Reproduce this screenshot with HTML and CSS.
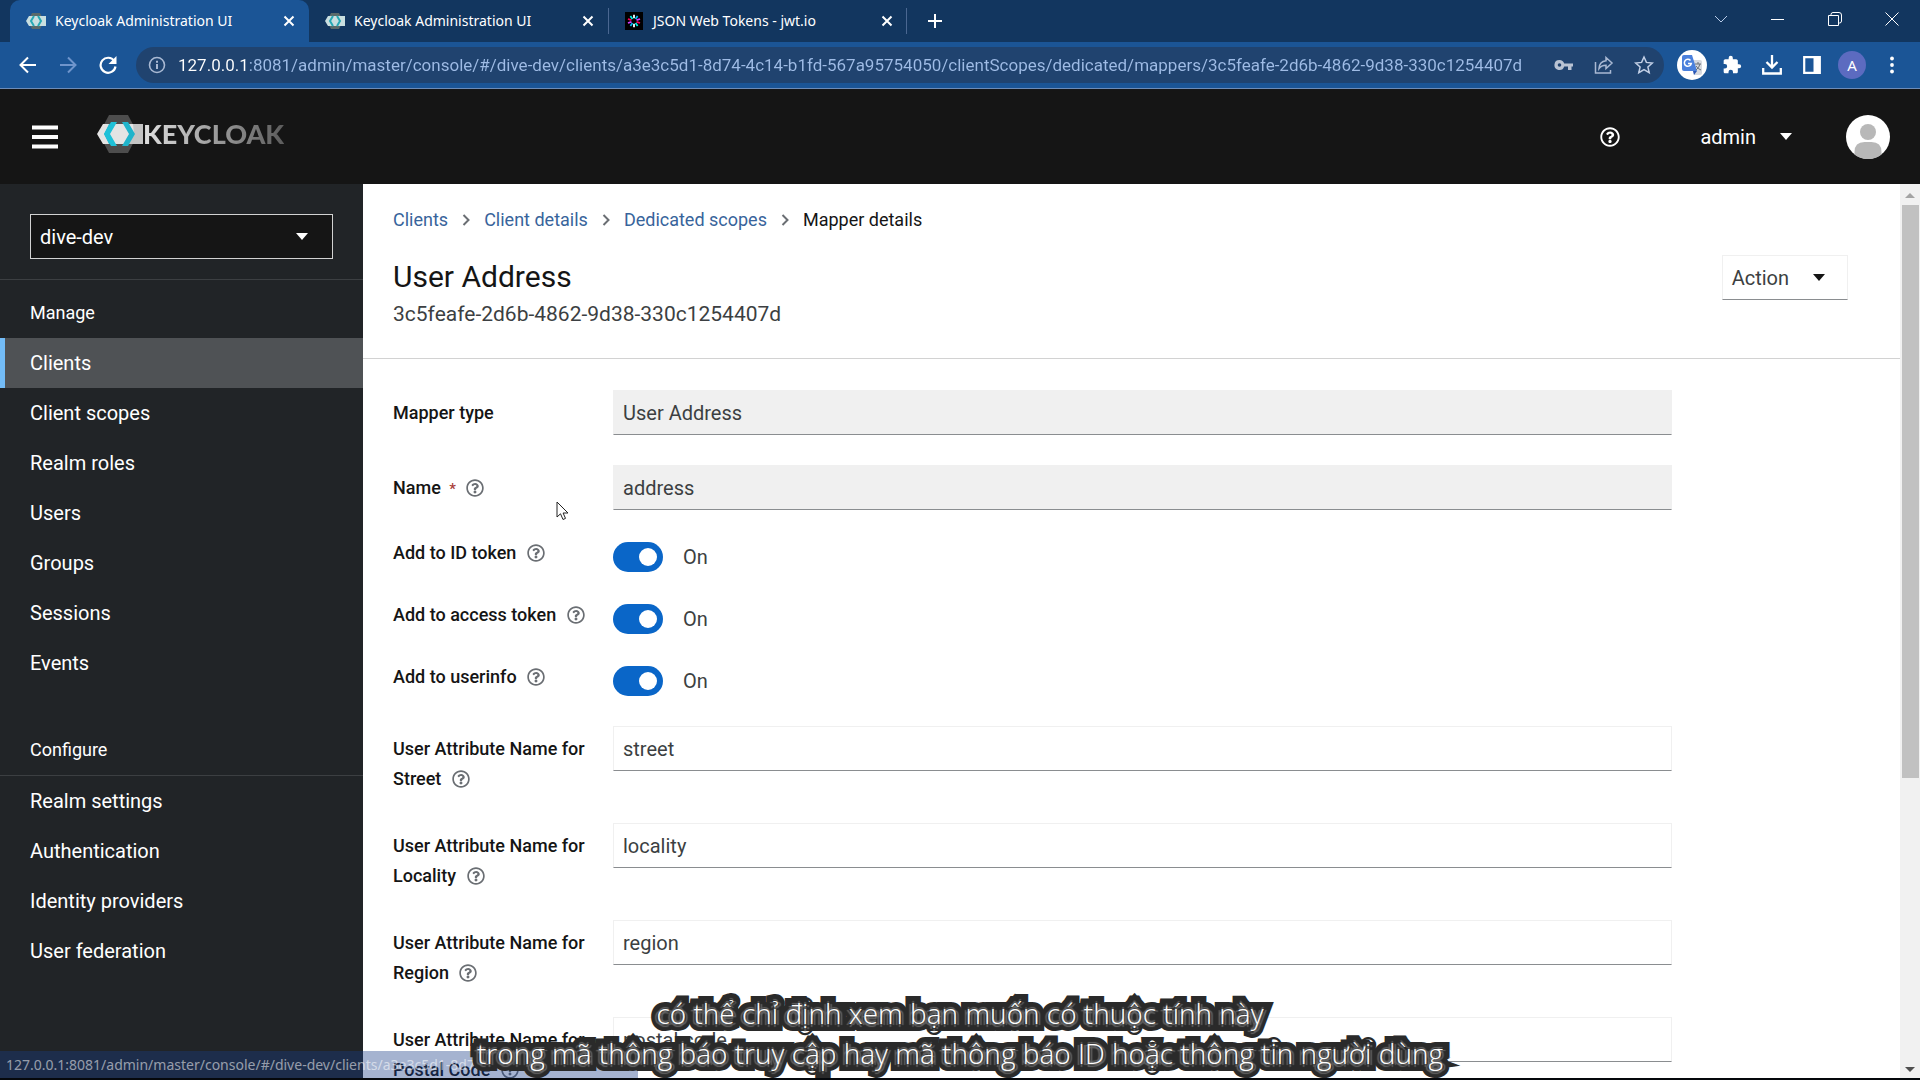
FILE: index.html
```html
<!DOCTYPE html>
<html lang="en">
<head>
<meta charset="utf-8">
<meta name="viewport" content="width=device-width, initial-scale=1">
<title>Keycloak Administration UI</title>
<link rel="stylesheet" href="styles.css">
</head>
<body>
<svg class="defs" aria-hidden="true">
  <defs>
    <symbol id="favicon" viewBox="0 0 20 16">
      <path d="M6 0h8l4 8-4 8H6L2 8z" fill="#5a6a6a"/>
      <path d="M3 3h17v10H3L0 8z" fill="#c9dfe0"/>
      <path d="M8 3 5 8l3 5M12 3l3 5-3 5" fill="none" stroke="#27a9b5" stroke-width="2"/>
    </symbol>
    <symbol id="close" viewBox="0 0 12 12"><path d="m1.500 1.500 9 9m0-9-9 9" fill="none" stroke="currentColor" stroke-width="2"/></symbol>
    <symbol id="help" viewBox="0 0 512 512">
      <path fill="currentColor" d="M256 8C119 8 8 119 8 256c0 137 111 248 248 248s248-111 248-248C504 119 393 8 256 8zm0 448c-110.500 0-200-89.400-200-200 0-110.500 89.500-200 200-200 110.500 0 200 89.500 200 200 0 110.500-89.400 200-200 200zm107.200-255.200c0 67.100-72.400 68.100-72.400 92.900V300c0 6.600-5.400 12-12 12h-45.600c-6.600 0-12-5.400-12-12v-8.700c0-35.700 27.100-50 47.600-61.500 17.600-9.800 28.300-16.500 28.300-29.600 0-17.200-22-28.700-39.800-28.700-23.200 0-33.900 11-48.900 30-4.100 5.100-11.500 6.100-16.700 2.100l-27.800-21.100c-5.100-3.900-6.300-11.100-2.600-16.400C184.800 131.500 214.900 112 261.800 112c49.100 0 101.500 38.300 101.500 88.800zM298 368c0 23.200-18.800 42-42 42s-42-18.800-42-42 18.800-42 42-42 42 18.800 42 42z"/>
    </symbol>
    <symbol id="caret" viewBox="0 0 12 7"><path d="M0 0h12L6 7z" fill="currentColor"/></symbol>
    <symbol id="angle" viewBox="0 0 8 12"><path d="m1.500 1 5 5-5 5" fill="none" stroke="#6a6e73" stroke-width="2"/></symbol>
  </defs>
</svg>

<header class="browser">
  <div class="tabs">
    <div class="tab tab-active">
      <svg class="favicon"><use href="#favicon"/></svg>
      <span class="tab-title">Keycloak Administration UI</span>
      <button class="icon-btn" aria-label="Close tab"><svg class="close"><use href="#close"/></svg></button>
    </div>
    <div class="tab">
      <svg class="favicon"><use href="#favicon"/></svg>
      <span class="tab-title">Keycloak Administration UI</span>
      <button class="icon-btn" aria-label="Close tab"><svg class="close"><use href="#close"/></svg></button>
    </div>
    <div class="tab tab-ruled">
      <svg class="favicon" viewBox="0 0 20 20">
        <path d="M0 0h20v20H0z" fill="#000"/>
        <g fill="none" stroke-width="2">
          <path d="M10 3v4M10 13v4" stroke="#fff"/>
          <path d="m14 4.500-2.300 3.200M8.300 12.300 6 15.500" stroke="#00b9f1"/>
          <path d="m16.700 7.800-3.900 1.300M7.200 10.900l-3.900 1.300" stroke="#d63aff"/>
          <path d="m16.700 12.200-3.900-1.300M7.200 9.100 3.300 7.800" stroke="#fb015b"/>
          <path d="m14 15.500-2.300-3.200M8.300 7.700 6 4.500" stroke="#00f2e6"/>
        </g>
      </svg>
      <span class="tab-title">JSON Web Tokens - jwt.io</span>
      <button class="icon-btn" aria-label="Close tab"><svg class="close"><use href="#close"/></svg></button>
    </div>
    <button class="icon-btn new-tab" aria-label="New tab"><svg class="i16" viewBox="0 0 16 16"><path d="M8 1v14M1 8h14" stroke="#fff" stroke-width="2"/></svg></button>
    <div class="window-controls">
      <button class="icon-btn" aria-label="Search tabs"><svg class="i14" viewBox="0 0 14 14"><path d="m1 4 6 6 6-6" fill="none" stroke="#b8cbe8"/></svg></button>
      <button class="icon-btn" aria-label="Minimise"><svg class="i14" viewBox="0 0 14 14"><path d="M0 7.500h13" stroke="#fff"/></svg></button>
      <button class="icon-btn" aria-label="Restore"><svg class="i14" viewBox="0 0 14 14"><path d="M.5 3.500h10v10H.500zM3 3.500V2.500Q3 .5 5 .5h6q2.500 0 2.500 2.500v6q0 2-2 2h-1" fill="none" stroke="#fff"/></svg></button>
      <button class="icon-btn" aria-label="Close window"><svg class="i14" viewBox="0 0 14 14"><path d="m.5.5 13 13m0-13-13 13" stroke="#fff"/></svg></button>
    </div>
  </div>
  <div class="toolbar">
    <button class="icon-btn" aria-label="Back"><svg class="i18" viewBox="0 0 18 18"><path d="M17 9H2m7-7.500L1.500 9 9 16.500" fill="none" stroke="#fff" stroke-width="2"/></svg></button>
    <button class="icon-btn" aria-label="Forward"><svg class="i18" viewBox="0 0 18 18"><path d="M1 9h15M9 1.500 16.500 9 9 16.500" fill="none" stroke="#6f95cc" stroke-width="2"/></svg></button>
    <button class="icon-btn" aria-label="Reload"><svg class="i18" viewBox="0 0 18 18"><path d="M15.300 5A7.500 7.500 0 1 0 16.500 10.500" fill="none" stroke="#fff" stroke-width="2.200"/><path d="M17.500 0v8h-8z" fill="#fff"/></svg></button>
    <div class="omnibox">
      <svg class="i18" viewBox="0 0 18 18"><circle cx="9" cy="9" r="7.500" fill="none" stroke="#a9b9d3" stroke-width="1.600"/><path d="M9 8v5M9 4.800v2" stroke="#a9b9d3" stroke-width="2"/></svg>
      <input class="url" type="text" aria-label="Address" value="127.0.0.1:8081/admin/master/console/#/dive-dev/clients/a3e3c5d1-8d74-4c14-b1fd-567a95754050/clientScopes/dedicated/mappers/3c5feafe-2d6b-4862-9d38-330c1254407d">
      <button class="icon-btn" aria-label="Passwords"><svg class="i20" viewBox="0 0 20 20"><path fill="#b9c3d3" fill-rule="evenodd" d="M5.500 5a5 5 0 1 0 4.700 6.500H14V15h3.500v-3.500H19v-3h-8.800A5 5 0 0 0 5.500 5zm0 3.200a1.800 1.800 0 1 1 0 3.600 1.800 1.800 0 0 1 0-3.600z"/></svg></button>
      <button class="icon-btn" aria-label="Share"><svg class="i20" viewBox="0 0 20 20"><path d="M1.500 7v11h15v-3M12 2.500l6 5.500-6 5.500v-3.300c-3.500 0-5.500 1-7 3.300.3-4.500 2.500-7.300 7-7.700z" fill="none" stroke="#a9b9d3" stroke-width="1.500"/></svg></button>
      <button class="icon-btn" aria-label="Bookmark"><svg class="i20" viewBox="0 0 20 20"><path d="m10 2 2.400 5.400 5.900.6-4.400 3.900 1.300 5.800L10 14.700l-5.200 3 1.300-5.800L1.700 8l5.900-.6z" fill="none" stroke="#c3d0e6" stroke-width="1.500"/></svg></button>
    </div>
    <button class="icon-btn" aria-label="Translate"><svg class="i30" viewBox="0 0 30 30"><circle cx="15" cy="15" r="15" fill="#fff"/><path d="M14 10h9q2 0 2 2v11q0 2-2 2h-6z" fill="#d6d9df"/><path d="M7 5h8l5 16H7q-2 0-2-2V7q0-2 2-2z" fill="#4a80dc"/><path d="m16 21 4 0-3 4z" fill="#2a56b5"/><path d="M13.500 10.500a3.500 3.500 0 1 0 .8 3H11" fill="none" stroke="#fff" stroke-width="1.500"/><path d="M18 14h6m-3-2v2m2 0q-1 4-4 6m0-4q2 3 5 4" fill="none" stroke="#6a7078"/></svg></button>
    <button class="icon-btn" aria-label="Extensions"><svg class="i20" viewBox="0 0 24 24"><path fill="#fff" d="M20.500 11H19V7c0-1.100-.9-2-2-2h-4V3.500a2.500 2.500 0 0 0-5 0V5H4c-1.100 0-2 .9-2 2v3.800h1.500a2.700 2.700 0 0 1 0 5.400H2V20c0 1.100.9 2 2 2h3.800v-1.500a2.700 2.700 0 0 1 5.400 0V22H17c1.100 0 2-.9 2-2v-4h1.500a2.500 2.500 0 0 0 0-5z"/></svg></button>
    <button class="icon-btn" aria-label="Downloads"><svg class="i20" viewBox="0 0 20 20"><path d="M10 0v12M4.500 7l5.500 5.500L15.500 7M1.200 13v5.500h17.600V13" fill="none" stroke="#fff" stroke-width="2.300"/></svg></button>
    <button class="icon-btn" aria-label="Side panel"><svg class="i18" viewBox="0 0 18 18"><path d="M1.200 1.200h15.600v15.600H1.200z" fill="none" stroke="#fff" stroke-width="2.200"/><path d="M10.500 1H17v16h-6.500z" fill="#fff"/></svg></button>
    <button class="icon-btn profile" aria-label="Profile A">A</button>
    <button class="icon-btn" aria-label="Menu"><svg class="i18" viewBox="0 0 18 18" fill="#fff"><circle cx="9" cy="2.500" r="1.900"/><circle cx="9" cy="9" r="1.900"/><circle cx="9" cy="15.500" r="1.900"/></svg></button>
  </div>
</header>

<div class="masthead">
  <button class="icon-btn" aria-label="Global navigation"><svg class="burger" viewBox="0 0 26 24"><path d="M0 2.500h26M0 12h26M0 21.500h26" stroke="#fff" stroke-width="4"/></svg></button>
  <a class="brand" href="#">
    <svg class="brand-mark" viewBox="0 0 46 38">
      <path d="M12 0h19l10 19-10 19H12L2 19z" fill="#4d4d4d"/>
      <path d="M6 9h40v20H6L0 19z" fill="#e4e4e4"/>
      <path d="M36 9h10v20H32l5-10z" fill="#c4c4c4"/>
      <path d="M12 9h6l-6 10 6 10h-6L7 19z" fill="#20b6ce"/>
      <path d="m14 7 6 0-7 12 7 12h-6L7 19z" fill="#1fc1d8"/>
      <path d="M25 7h6l7 12-7 12h-6l7-12z" fill="#1fb4cb"/>
    </svg>
    <span class="brand-name">KEYCLOAK</span>
  </a>
  <div class="masthead-tools">
    <button class="icon-btn" aria-label="Help"><svg class="i20"><use href="#help"/></svg></button>
    <button class="user-menu">admin <svg class="caret"><use href="#caret"/></svg></button>
    <svg class="avatar" viewBox="0 0 44 44"><circle cx="22" cy="22" r="22" fill="#fff"/><circle cx="22" cy="17" r="8" fill="#b8b8b8"/><path d="M8.500 39.400V37q0-10 10-10h7q10 0 10 10v2.400a22 22 0 0 1-27 0z" fill="#b8b8b8"/></svg>
  </div>
</div>

<div class="page">
  <nav class="sidebar">
    <div class="realm">
      <div class="realm-box">
        <select class="realm-select" aria-label="Realm"><option>dive-dev</option></select>
        <svg class="caret"><use href="#caret"/></svg>
      </div>
    </div>
    <h2 class="nav-title">Manage</h2>
    <ul class="nav-list">
      <li><a class="nav-link nav-current" href="#">Clients</a></li>
      <li><a class="nav-link" href="#">Client scopes</a></li>
      <li><a class="nav-link" href="#">Realm roles</a></li>
      <li><a class="nav-link" href="#">Users</a></li>
      <li><a class="nav-link" href="#">Groups</a></li>
      <li><a class="nav-link" href="#">Sessions</a></li>
      <li><a class="nav-link" href="#">Events</a></li>
    </ul>
    <h2 class="nav-title nav-title-second">Configure</h2>
    <ul class="nav-list nav-list-ruled">
      <li><a class="nav-link" href="#">Realm settings</a></li>
      <li><a class="nav-link" href="#">Authentication</a></li>
      <li><a class="nav-link" href="#">Identity providers</a></li>
      <li><a class="nav-link" href="#">User federation</a></li>
    </ul>
  </nav>

  <main class="content">
    <div class="page-head">
      <nav class="crumbs" aria-label="Breadcrumb">
        <a href="#">Clients</a><svg class="angle"><use href="#angle"/></svg>
        <a href="#">Client details</a><svg class="angle"><use href="#angle"/></svg>
        <a href="#">Dedicated scopes</a><svg class="angle"><use href="#angle"/></svg>
        <span>Mapper details</span>
      </nav>
      <div class="title-row">
        <div>
          <h1 class="title">User Address</h1>
          <p class="subtitle">3c5feafe-2d6b-4862-9d38-330c1254407d</p>
        </div>
        <button class="action">Action <svg class="caret"><use href="#caret"/></svg></button>
      </div>
    </div>

    <form class="form">
      <div class="row">
        <label class="label" for="type">Mapper type</label>
        <input class="field field-off" id="type" type="text" value="User Address" readonly>
      </div>
      <div class="row">
        <label class="label" for="name">Name <span class="star">*</span> <svg class="help"><use href="#help"/></svg></label>
        <input class="field field-off" id="name" type="text" value="address" readonly>
      </div>
      <div class="row row-switch">
        <label class="label" for="idtoken">Add to ID token <svg class="help"><use href="#help"/></svg></label>
        <div class="switch-line"><input class="switch" id="idtoken" type="checkbox" checked><span>On</span></div>
      </div>
      <div class="row row-switch">
        <label class="label" for="access">Add to access token <svg class="help"><use href="#help"/></svg></label>
        <div class="switch-line"><input class="switch" id="access" type="checkbox" checked><span>On</span></div>
      </div>
      <div class="row row-switch">
        <label class="label" for="userinfo">Add to userinfo <svg class="help"><use href="#help"/></svg></label>
        <div class="switch-line"><input class="switch" id="userinfo" type="checkbox" checked><span>On</span></div>
      </div>
      <div class="row">
        <label class="label" for="street">User Attribute Name for<br>Street <svg class="help"><use href="#help"/></svg></label>
        <input class="field" id="street" type="text" value="street">
      </div>
      <div class="row">
        <label class="label" for="locality">User Attribute Name for<br>Locality <svg class="help"><use href="#help"/></svg></label>
        <input class="field" id="locality" type="text" value="locality">
      </div>
      <div class="row">
        <label class="label" for="region">User Attribute Name for<br>Region <svg class="help"><use href="#help"/></svg></label>
        <input class="field" id="region" type="text" value="region">
      </div>
      <div class="row">
        <label class="label" for="postal">User Attribute Name for<br>Postal Code <svg class="help"><use href="#help"/></svg></label>
        <input class="field" id="postal" type="text" value="postal code">
      </div>
    </form>
  </main>

  <div class="scrollbar" aria-hidden="true">
    <svg class="arrow arrow-up" viewBox="0 0 10 5"><path d="M0 5h10L5 0z" fill="#a3a3a3"/></svg>
    <div class="track"><div class="thumb"></div></div>
    <svg class="arrow" viewBox="0 0 10 5"><path d="M0 0h10L5 5z" fill="#505050"/></svg>
  </div>
</div>

<svg class="pointer" viewBox="0 0 13 20" aria-hidden="true"><path d="M1 1v15l3.500-3.200L7 18.500l2.500-1.100-2.400-5.400H12z" fill="#fff" stroke="#222"/></svg>
<div class="status">127.0.0.1:8081/admin/master/console/#/dive-dev/clients/a3e3c5d1-8d74-4c14-b1fd-567…</div>
<div class="captions">có thể chỉ định xem bạn muốn có thuộc tính này<br>trong mã thông báo truy cập hay mã thông báo ID hoặc thông tin người dùng</div>
</body>
</html>
```
FILE: styles.css
```css
* { box-sizing: border-box; }

body {
  margin: 0;
  height: 100vh;
  display: flex;
  flex-direction: column;
  overflow: hidden;
  border-bottom: 2px solid #05080c;
  background: #fff;
  color: #151515;
  font: 20px/30px Roboto, "Noto Sans", sans-serif;
}

h1, h2, p, ul { margin: 0; padding: 0; font-weight: 400; }
ul { list-style: none; }
a { text-decoration: none; }
svg { display: block; flex: none; }
button, input, select { font: inherit; color: inherit; margin: 0; }

.defs { position: absolute; width: 0; height: 0; }
.i14 { width: 14px; height: 14px; }
.i16 { width: 16px; height: 16px; }
.i18 { width: 18px; height: 18px; }
.i20 { width: 20px; height: 20px; }
.i30 { width: 30px; height: 30px; }
.caret { width: 12px; height: 7px; }

.icon-btn {
  display: flex;
  align-items: center;
  justify-content: center;
  flex: none;
  padding: 0;
  border: 0;
  background: none;
  color: #fff;
}

/* Browser frame */
.browser {
  flex: none;
  color: #fff;
  font-family: "Noto Sans", sans-serif;
  border-bottom: 1px solid #6d8cb8;
}
.tabs {
  display: flex;
  height: 42px;
  padding-left: 10px;
  background: #12365f;
}
.tab {
  display: flex;
  align-items: center;
  width: 299px;
  padding: 0 14px 0 16px;
  gap: 9px;
  font-size: 14px;
}
.tab-active { background: #1b5596; border-radius: 10px 10px 0 0; }
.tab-ruled {
  background: linear-gradient(#4a6791, #4a6791) 0 50% / 1px 26px no-repeat,
              linear-gradient(#4a6791, #4a6791) 100% 50% / 1px 26px no-repeat;
}
.favicon { width: 20px; height: 18px; }
.tab-title { flex: 1; white-space: nowrap; }
.close { width: 12px; height: 12px; }
.new-tab { width: 56px; }
.window-controls { display: flex; margin-left: auto; height: 38px; }
.window-controls .icon-btn { width: 57px; }

.toolbar {
  display: flex;
  align-items: center;
  height: 46px;
  padding: 0 8px;
  background: #1b5596;
}
.toolbar > .icon-btn { width: 40px; height: 40px; }
.omnibox {
  flex: 1;
  display: flex;
  align-items: center;
  height: 36px;
  margin: 0 8px;
  padding-left: 12px;
  border-radius: 18px;
  background: #20436f;
}
.omnibox .icon-btn { width: 40px; }
.url {
  flex: 1;
  min-width: 0;
  padding: 0;
  margin-left: 12px;
  border: 0;
  outline: 0;
  font-family: Roboto, sans-serif;
  font-size: 17px;
  background: linear-gradient(90deg, #fff 71px, #9fbce6 71px);
  -webkit-background-clip: text;
  background-clip: text;
  -webkit-text-fill-color: transparent;
}
.toolbar > .profile {
  width: 28px;
  height: 28px;
  margin: 0 6px;
  border-radius: 50%;
  background: #5c6bc0;
  font-size: 15px;
}

/* Masthead */
.masthead {
  flex: none;
  display: flex;
  align-items: center;
  height: 95px;
  padding: 0 30px 0 32px;
  background: #151515;
  color: #fff;
}
.burger { width: 26px; height: 24px; }
.brand {
  display: flex;
  align-items: center;
  margin: 0 0 6px 39px;
}
.brand-mark { width: 46px; height: 38px; }
.brand-name {
  font: 900 27px/30px Lato, sans-serif;
  background: linear-gradient(90deg, #e0e0e0, #5c5c5c);
  -webkit-background-clip: text;
  background-clip: text;
  color: transparent;
}
.masthead-tools { display: flex; align-items: center; margin-left: auto; }
.user-menu {
  display: flex;
  align-items: center;
  gap: 24px;
  margin: 0 54px 0 80px;
  padding: 0;
  border: 0;
  background: none;
}
.avatar { width: 44px; height: 44px; }

/* Page */
.page { flex: 1; min-height: 0; display: flex; }
.sidebar { flex: none; width: 363px; background: #212427; color: #fff; overflow: hidden; }
.realm { padding: 30px 30px 20px; border-bottom: 1px solid #3c3f42; }
.realm-box { display: grid; align-items: center; background: #151515; border: 1px solid #d2d2d2; }
.realm-select, .realm-box .caret { grid-area: 1 / 1; }
.realm-select {
  appearance: none;
  height: 43px;
  padding: 0 9px;
  border: 0;
  border-radius: 0;
  background: transparent;
}
.realm-box .caret { justify-self: end; margin-right: 24px; pointer-events: none; }
.nav-title { padding: 18px 30px 10px; font-size: 18px; }
.nav-title-second { margin-top: 29px; }
.nav-list-ruled { border-top: 1px solid #3c3f42; }
.nav-link { display: block; padding: 10px 30px; color: #fff; }
.nav-current {
  padding-left: 25px;
  border-left: 5px solid #73bcf7;
  background: #4f5255;
}

.content { flex: 1; min-width: 0; overflow: hidden; }
.page-head { padding: 21px 52px 29px 30px; border-bottom: 1px solid #d2d2d2; }
.crumbs { display: flex; align-items: center; gap: 14px; font-size: 18px; }
.crumbs a { color: #38649b; }
.angle { width: 8px; height: 12px; }
.title-row { display: flex; justify-content: space-between; align-items: flex-start; margin-top: 20px; }
.title { font-size: 30px; line-height: 44px; }
.subtitle { color: #3c3f42; font-size: 21px; }
.action {
  display: flex;
  align-items: center;
  gap: 24px;
  height: 45px;
  padding: 0 22px 0 9px;
  border: 1px solid #f0f0f0;
  border-bottom-color: #8a8d90;
  background: #fff;
  color: #3c3f42;
}
.action .caret { color: #151515; }

.form {
  display: flex;
  flex-direction: column;
  gap: 30px;
  padding: 31px 228px 0 30px;
}
.row { display: grid; grid-template-columns: 220px 1fr; align-items: start; }
.label { padding-top: 8px; font-size: 18px; font-weight: 500; margin-bottom: -1px; }
.help { display: inline-block; width: 18px; height: 18px; margin-left: 6px; vertical-align: -3px; color: #6a6e73; }
.star { margin-left: 4px; color: #a8403a; font-size: 15px; }
.field {
  height: 45px;
  padding: 0 9px;
  border: 1px solid #f0f0f0;
  border-bottom-color: #8a8d90;
  border-radius: 0;
  background: #fff;
  color: #3c3f42;
}
.field-off { background: #f0f0f0; }
.row-switch { height: 32px; }
.row-switch .label { padding: 0; line-height: 26px; }
.switch-line { display: flex; align-items: center; gap: 20px; height: 34px; color: #3c3f42; }
.switch {
  appearance: none;
  width: 50px;
  height: 30px;
  border-radius: 15px;
  background: #0a66c8;
}
.switch::before {
  content: "";
  display: block;
  width: 18px;
  height: 18px;
  margin: 6px 0 0 26px;
  border-radius: 50%;
  background: #fff;
}

.scrollbar {
  flex: none;
  display: flex;
  flex-direction: column;
  align-items: center;
  width: 20px;
  padding: 9px 0 6px;
  background: #f1f1f1;
}
.arrow { width: 10px; height: 5px; }
.track { flex: 1; width: 17px; padding: 7px 0; }
.thumb { height: 67%; background: #c1c1c1; }

/* Overlays */
.pointer { position: absolute; left: 556px; top: 501px; width: 13px; height: 20px; }
.status {
  position: absolute;
  left: 0;
  bottom: 2px;
  width: 638px;
  height: 27px;
  padding-left: 6px;
  overflow: hidden;
  white-space: nowrap;
  font: 14px/27px "Noto Sans", sans-serif;
  background: rgba(22, 60, 134, .39);
  color: rgba(255, 255, 255, .55);
}
.captions {
  position: absolute;
  left: 0;
  right: 0;
  bottom: 7px;
  text-align: center;
  font: 300 28px/40px "Open Sans", "Noto Sans", sans-serif;
  color: #fff;
  -webkit-text-stroke: 14px #2a2a2a;
  stroke-linejoin: round;
  paint-order: stroke fill;
  text-shadow: 0 3px 1px #666, 3px 1px 1px #666, -3px 1px 1px #666, 0 -2px 1px #666;
}
```
